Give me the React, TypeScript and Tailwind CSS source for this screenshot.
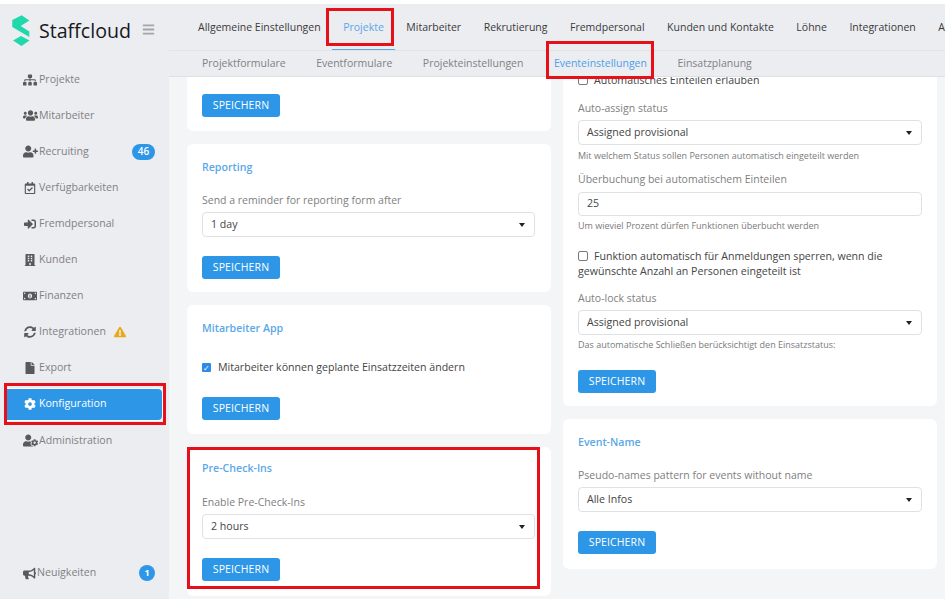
import { FaBuilding, FaBullhorn, FaCog, FaExclamationTriangle, FaFile, FaMoneyBillAlt, FaRegCalendarCheck, FaSignInAlt, FaSitemap, FaSyncAlt, FaUserCog, FaUserPlus, FaUsers, FaBars } from 'react-icons/fa';
import type { ReactNode } from 'react';

const navItems = [
  { label: 'Projekte', icon: <FaSitemap size={14} /> },
  { label: 'Mitarbeiter', icon: <FaUsers size={15} /> },
  { label: 'Recruiting', icon: <FaUserPlus size={15} />, badge: '46' },
  { label: 'Verfügbarkeiten', icon: <FaRegCalendarCheck size={12} /> },
  { label: 'Fremdpersonal', icon: <FaSignInAlt size={12} /> },
  { label: 'Kunden', icon: <FaBuilding size={12} /> },
  { label: 'Finanzen', icon: <FaMoneyBillAlt size={14} /> },
  { label: 'Integrationen', icon: <FaSyncAlt size={12} />, warn: true },
  { label: 'Export', icon: <FaFile size={12} /> },
  { label: 'Konfiguration', icon: <FaCog size={12} />, active: true },
  { label: 'Administration', icon: <FaUserCog size={15} /> },
];

const topTabs = ['Allgemeine Einstellungen', 'Projekte', 'Mitarbeiter', 'Rekrutierung', 'Fremdpersonal', 'Kunden und Kontakte', 'Löhne', 'Integrationen', 'Administration'];
const subTabs = ['Projektformulare', 'Eventformulare', 'Projekteinstellungen', 'Eventeinstellungen', 'Einsatzplanung'];

const SaveButton = () => (
  <button className="w-[78px] h-[23px] rounded-[3px] bg-[#2d96e6] text-white text-[10.5px] tracking-[0.1px] flex items-center justify-center">
    SPEICHERN
  </button>
);

const SelectBox = ({ value }: { value: string }) => (
  <div className="h-[25px] rounded-[4px] border border-[#dfe1e5] bg-white flex items-center justify-between pl-2 pr-[9px] text-[10.6px] text-[#444]">
    <span>{value}</span>
    <span className="w-0 h-0 border-x-[3.5px] border-x-transparent border-t-[4px] border-t-[#222]" />
  </div>
);

const Card = ({ className, children }: { className?: string; children: ReactNode }) => (
  <div className={`bg-white rounded-[6px] px-[15px] ${className ?? ''}`}>{children}</div>
);

const CardTitle = ({ children }: { children: ReactNode }) => (
  <h3 className="text-[10.6px] font-semibold text-[#5aa8e8] leading-[14px]">{children}</h3>
);

const Label = ({ children }: { children: ReactNode }) => (
  <div className="text-[10.5px] text-[#808080] leading-[14px]">{children}</div>
);

const Hint = ({ children }: { children: ReactNode }) => (
  <div className="text-[9px] text-[#7a7a7a] leading-[12px]">{children}</div>
);

const Logo = () => (
  <svg width="18" height="32" viewBox="0 0 18 32">
    <path d="M0.300 5 9.700 0.300 17.300 5.500 8.700 11 17.300 16.500 17.300 22 0.300 12Z" fill="#1fd8ac" />
    <path d="M1 25.500 9 21 17.500 25.500 9.500 31Z" fill="#1fd8ac" />
  </svg>
);

export default function App() {
  return (
    <div className="w-[945px] h-[599px] relative overflow-hidden bg-white pt-[4px] font-['Open_Sans',sans-serif] flex">
      <aside className="w-[169px] h-full bg-[#ecedf1] flex flex-col shrink-0">
        <div className="h-[47px] flex items-center pl-[12px] pt-[7px]">
          <Logo />
          <span className="ml-[9px] text-[19.6px] font-normal text-[#16181c]">Staffcloud</span>
          <FaBars size={13} className="ml-[11px] -mt-[4px] text-[#a3a6a8]" />
        </div>
        <nav className="mt-[10.500px] flex flex-col">
          {navItems.map((item) => (
            <div key={item.label} className="h-[36.100px] flex items-center">
              <div
                className={`flex-1 flex items-center ${item.active ? 'h-[31px] ml-[7px] mr-[7px] pl-[15px] bg-[#2d96e6] text-white rounded-r-[4px] ring-1 ring-white' : 'h-full pl-[22px] text-[#7f8183]'}`}
              >
                <span className={`w-[16px] flex justify-center shrink-0 ${item.active ? 'text-white' : 'text-[#58595b]'}`}>{item.icon}</span>
                <span className="ml-[1px] text-[10.6px]">{item.label}</span>
                {item.badge && (
                  <span className="ml-auto mr-[14px] w-[23px] h-[16px] rounded-full bg-[#2d96e6] text-white text-[10px] font-semibold flex items-center justify-center">
                    {item.badge}
                  </span>
                )}
                {item.warn && <FaExclamationTriangle size={12} className="ml-[8px] text-[#e8a91c]" />}
              </div>
            </div>
          ))}
        </nav>
        <div className="mt-auto mb-[16px] h-[20px] flex items-center pl-[23px] text-[#7f8183]">
          <FaBullhorn size={13} className="text-[#58595b]" />
          <span className="ml-[1px] text-[10.6px]">Neuigkeiten</span>
          <span className="ml-auto mr-[14px] w-[16px] h-[16px] rounded-full bg-[#2d96e6] text-white text-[9px] font-bold flex items-center justify-center">1</span>
        </div>
      </aside>

      <main className="flex-1 min-w-0 flex flex-col bg-[#f4f5f7]">
        <div className="h-[47px] shrink-0 bg-[#ecedf1] border-b border-[#e2e3e7] flex items-center pl-[29px] gap-[22.500px] text-[10.500px] text-[#3a3a3a] whitespace-nowrap overflow-hidden">
          {topTabs.map((tab) => (
            <span key={tab} className={`relative pt-[2px] shrink-0 ${tab === 'Projekte' ? 'text-[#5aa8e8]' : ''}`}>
              {tab}
            </span>
          ))}
        </div>
        <div className="h-[26px] shrink-0 bg-[#ecedf1] border-b border-[#dfe0e4] flex items-center pl-[33px] gap-[30.500px] text-[10.500px] text-[#7f8183] whitespace-nowrap">
          {subTabs.map((tab) => (
            <span key={tab} className={tab === 'Eventeinstellungen' ? 'text-[#4ba0ea]' : ''}>{tab}</span>
          ))}
        </div>

        <div className="flex-1 min-h-0 overflow-hidden flex gap-[12px] pl-[18px] pr-[8px]">
          <div className="w-[364px] shrink-0 flex flex-col gap-[13px]">
            <Card className="rounded-t-none h-[54px] pt-[17px] shrink-0">
              <SaveButton />
            </Card>
            <Card className="h-[148px] pt-[16px] shrink-0">
              <CardTitle>Reporting</CardTitle>
              <div className="mt-[19px]"><Label>Send a reminder for reporting form after</Label></div>
              <div className="mt-[5px] mr-[1px]"><SelectBox value="1 day" /></div>
              <div className="mt-[19px]"><SaveButton /></div>
            </Card>
            <Card className="h-[129px] pt-[16px] shrink-0">
              <CardTitle>Mitarbeiter App</CardTitle>
              <label className="mt-[25px] flex items-center gap-[7px] text-[10.6px] text-[#444]">
                <span className="w-[9px] h-[9px] rounded-[1px] bg-[#2d8ae6] text-white text-[8px] leading-[9px] flex items-center justify-center">✓</span>
                Mitarbeiter können geplante Einsatzzeiten ändern
              </label>
              <div className="mt-[21px]"><SaveButton /></div>
            </Card>
            <Card className="h-[149px] pt-[14px] shrink-0">
              <CardTitle>Pre-Check-Ins</CardTitle>
              <div className="mt-[20px]"><Label>Enable Pre-Check-Ins</Label></div>
              <div className="mt-[5px] mr-[1px]"><SelectBox value="2 hours" /></div>
              <div className="mt-[19px]"><SaveButton /></div>
            </Card>
          </div>

          <div className="flex-1 min-w-0 flex flex-col gap-[13px]">
            <Card className="rounded-t-none h-[329px] shrink-0">
              <label className="-mt-[4px] flex items-center gap-[6px] text-[10.6px] text-[#444] leading-[14px]">
                <span className="w-[10px] h-[10px] rounded-[2px] border border-[#777] bg-white" />
                Automatisches Einteilen erlauben
              </label>
              <div className="mt-[14px]"><Label>Auto-assign status</Label></div>
              <div className="mt-[5px]"><SelectBox value="Assigned provisional" /></div>
              <div className="mt-[5px]"><Hint>Mit welchem Status sollen Personen automatisch eingeteilt werden</Hint></div>
              <div className="mt-[10px]"><Label>Überbuchung bei automatischem Einteilen</Label></div>
              <div className="mt-[6px] h-[24px] rounded-[4px] border border-[#dfe1e5] flex items-center pl-2 text-[10.6px] text-[#444]">25</div>
              <div className="mt-[4px]"><Hint>Um wieviel Prozent dürfen Funktionen überbucht werden</Hint></div>
              <label className="mt-[17px] block text-[10.6px] text-[#444] leading-[15px]">
                <span className="inline-block align-[-1px] w-[10px] h-[10px] rounded-[2px] border border-[#777] bg-white mr-[6px]" />
                Funktion automatisch für Anmeldungen sperren, wenn die gewünschte Anzahl an Personen eingeteilt ist
              </label>
              <div className="mt-[12px]"><Label>Auto-lock status</Label></div>
              <div className="mt-[5px]"><SelectBox value="Assigned provisional" /></div>
              <div className="mt-[4px]"><Hint>Das automatische Schließen berücksichtigt den Einsatzstatus:</Hint></div>
              <div className="mt-[19px]"><SaveButton /></div>
            </Card>
            <Card className="h-[150px] pt-[16px] shrink-0">
              <CardTitle>Event-Name</CardTitle>
              <div className="mt-[19px]"><Label>Pseudo-names pattern for events without name</Label></div>
              <div className="mt-[5px]"><SelectBox value="Alle Infos" /></div>
              <div className="mt-[19px]"><SaveButton /></div>
            </Card>
          </div>
        </div>
      </main>

      {/* active top tab underline and red annotation boxes lying over the screenshot */}
      <div className="absolute left-[332px] top-[49px] w-[63px] h-[1px] bg-[#5aa8e8]" />
      <div className="absolute left-[326px] top-[8px] w-[68px] h-[38px] border-[3px] border-[#e5101a]" />
      <div className="absolute left-[546px] top-[41px] w-[108px] h-[38px] border-[3px] border-[#e5101a]" />
      <div className="absolute left-[4px] top-[383px] w-[162px] h-[42px] border-[3px] border-[#e5101a]" />
      <div className="absolute left-[187px] top-[447px] w-[353px] h-[142px] border-[3px] border-[#e5101a]" />
    </div>
  );
}
